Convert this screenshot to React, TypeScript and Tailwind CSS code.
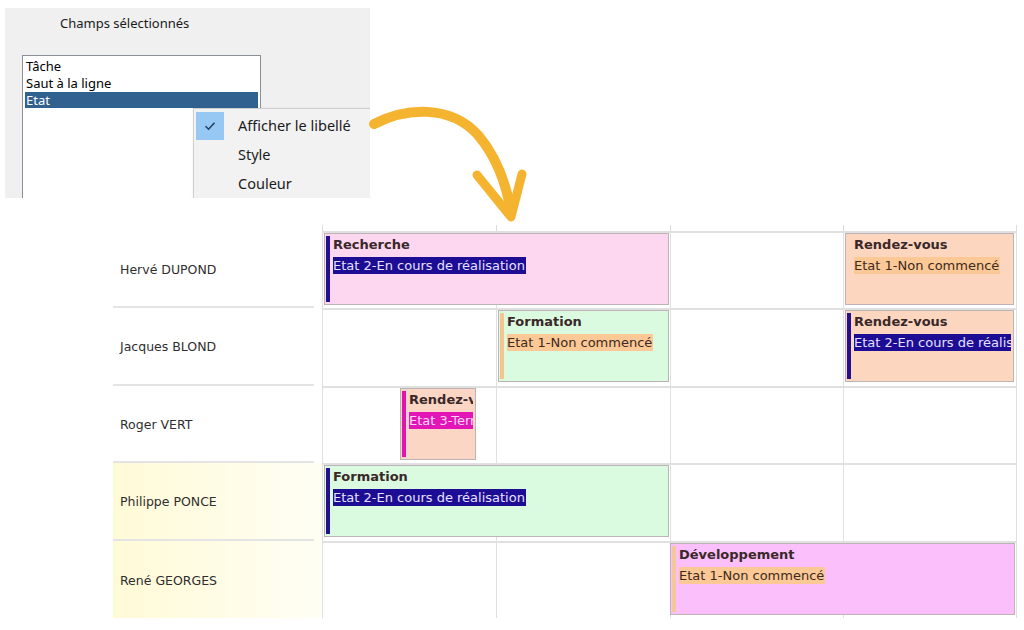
import React from "react";

type Bar = { l: number; w: number; bg: string; acc: string | null; title: string; state: 1 | 2 | 3 };
type Row = { name: string; h: number; yellow?: boolean; bars: Bar[] };

const STATES: Record<number, { text: string; cls: string }> = {
  1: { text: "Etat 1-Non commencé", cls: "bg-[#fbc896] text-[#3b2a20]" },
  2: { text: "Etat 2-En cours de réalisation", cls: "bg-[#1d0c94] text-[#e6e2ff]" },
  3: { text: "Etat 3-Terminé", cls: "bg-[#e216b6] text-[#ffd6f6]" },
};

const ROWS: Row[] = [
  {
    name: "Hervé DUPOND",
    h: 77,
    bars: [
      { l: 2, w: 345, bg: "#fdd7f0", acc: "#22108f", title: "Recherche", state: 2 },
      { l: 523, w: 169, bg: "#fdd6c0", acc: null, title: "Rendez-vous", state: 1 },
    ],
  },
  {
    name: "Jacques BLOND",
    h: 78,
    bars: [
      { l: 176, w: 171, bg: "#dbfbe0", acc: "#f2c591", title: "Formation", state: 1 },
      { l: 523, w: 169, bg: "#fdd6c0", acc: "#22108f", title: "Rendez-vous", state: 2 },
    ],
  },
  {
    name: "Roger VERT",
    h: 77,
    bars: [{ l: 78, w: 76, bg: "#fcd6c4", acc: "#e014b0", title: "Rendez-vous", state: 3 }],
  },
  {
    name: "Philippe PONCE",
    h: 78,
    yellow: true,
    bars: [{ l: 2, w: 345, bg: "#dbfbe0", acc: "#22108f", title: "Formation", state: 2 }],
  },
  {
    name: "René GEORGES",
    h: 77,
    yellow: true,
    bars: [{ l: 348, w: 345, bg: "#fbc0fb", acc: "#f6c79b", title: "Développement", state: 1 }],
  },
];

function GanttBar({ b }: { b: Bar }) {
  const st = STATES[b.state];
  return (
    <div
      className="absolute top-[2px] h-[72px] border border-[#bdb3b6] overflow-hidden"
      style={{ left: b.l, width: b.w, backgroundColor: b.bg }}
    >
      {b.acc && (
        <div className="absolute left-[1px] top-[2px] bottom-[2px] w-[4px]" style={{ backgroundColor: b.acc }} />
      )}
      <div className="ml-[8px] mr-[2px] pt-[2px] overflow-hidden whitespace-nowrap text-[13px] [font-family:'DejaVu_Sans',sans-serif]">
        <div className="font-bold leading-[17px] text-[#3a2828]">{b.title}</div>
        <div className="leading-[17px] mt-[4px]">
          <span className={`inline-block pr-[1px] ${st.cls}`}>{st.text}</span>
        </div>
      </div>
    </div>
  );
}

export default function App() {
  return (
    <div className="relative w-[1024px] h-[630px] bg-white overflow-hidden">
      {/* Top dialog fragment */}
      <div className="relative ml-[5px] mt-[8px] w-[365px] h-[190px] bg-[#f0f0f0] overflow-hidden [font-family:'Noto_Sans',sans-serif]">
        <div className="pl-[55px] pt-[6px] text-[13px] leading-[19px] text-[#1a1a1a]">Champs sélectionnés</div>
        <div className="ml-[17px] mt-[22px] w-[239px] h-[160px] bg-white border border-[#8a8f98] pt-[2px] px-[2px] text-[13px] text-black">
          <div className="leading-[17px] pl-[1px]">Tâche</div>
          <div className="leading-[17px] pl-[1px]">Saut à la ligne</div>
          <div className="leading-[16px] pl-[1px] bg-[#31618f] text-white">Etat</div>
        </div>
        {/* context menu */}
        <div className="absolute left-[188px] top-[100px] w-[200px] h-[100px] bg-[#f2f2f2] border border-[#cfcfcf] shadow-[1px_1px_3px_rgba(0,0,0,0.15)]">
          <div className="flex items-center h-[29px] mt-[2px]">
            <div className="ml-[2px] w-[28px] h-[28px] bg-[#96c8f3] flex items-center justify-center">
              <svg width="12" height="10" viewBox="0 0 12 10">
                <path d="M1.5 5.2 L4.6 8.2 L10.5 1.8" fill="none" stroke="#24405f" strokeWidth="1.6" />
              </svg>
            </div>
            <span className="ml-[14px] text-[14.5px] text-[#1b1b1b]">Afficher le libellé</span>
          </div>
          <div className="flex items-center h-[29px]">
            <span className="ml-[44px] text-[14.5px] text-[#1b1b1b]">Style</span>
          </div>
          <div className="flex items-center h-[29px]">
            <span className="ml-[44px] text-[14.5px] text-[#1b1b1b]">Couleur</span>
          </div>
        </div>
      </div>

      {/* Arrow drawing */}
      <svg className="absolute left-[360px] top-[90px]" width="180" height="140" viewBox="360 90 180 140">
        <path
          d="M374 124 C 405 108, 450 104, 478 135 C 495 155, 506 182, 511 212"
          fill="none"
          stroke="#f4b42f"
          strokeWidth="10"
          strokeLinecap="round"
        />
        <path
          d="M477 175 L511 217 L522 174"
          fill="none"
          stroke="#f4b42f"
          strokeWidth="9"
          strokeLinecap="round"
          strokeLinejoin="round"
        />
      </svg>

      {/* Gantt */}
      <div className="ml-[113px] mt-[27px] flex [font-family:'DejaVu_Sans',sans-serif]">
        {/* name column */}
        <div className="w-[209px] pt-[6px] flex flex-col">
          {ROWS.map((r, i) => (
            <div
              key={r.name}
              className={`flex flex-col ${r.yellow ? "bg-gradient-to-r from-[#fffad6] to-[#fffef4]" : ""}`}
              style={{ height: r.h }}
            >
              <div className="flex-1 flex items-center pl-[7px] pt-[3px] text-[12.5px] text-[#2e2e2e]">{r.name}</div>
              {i < ROWS.length - 1 && <div className="h-[2px] w-[201px] bg-[#e4e4e4]" />}
            </div>
          ))}
        </div>
        {/* grid */}
        <div className="flex flex-col w-[695px]">
          <div className="grid grid-cols-4 h-[6px]">
            {[0, 1, 2, 3].map((c) => (
              <div key={c} className={`border-l border-[#dcdcdc] ${c === 3 ? "border-r" : ""}`} />
            ))}
          </div>
          {ROWS.map((r) => (
            <div key={r.name} className="relative grid grid-cols-4" style={{ height: r.h }}>
              {[0, 1, 2, 3].map((c) => (
                <div
                  key={c}
                  className={`border-l border-t-2 border-[#e0e0e0] ${c === 3 ? "border-r" : ""}`}
                />
              ))}
              {r.bars.map((b, j) => (
                <GanttBar key={j} b={b} />
              ))}
            </div>
          ))}
        </div>
      </div>
    </div>
  );
}
